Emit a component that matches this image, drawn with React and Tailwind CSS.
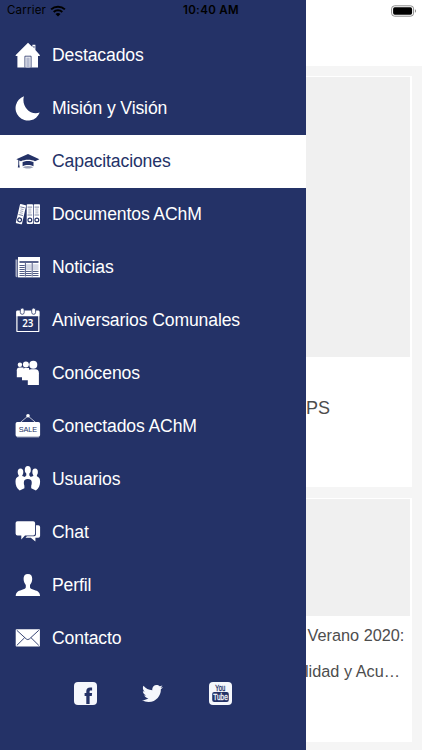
import { FaTwitter } from 'react-icons/fa';

const NAVY = '#243267';

const HomeIcon = () => (
  <>
    <path d="M13 .7 17.4 5V2.800h3v5.100l4.600 5.400-.4.600H23v11.600H2.400V13.900H.9l-.4-.6z" />
    <path d="M9.900 25.500V14.200h6.200v11.300" fill="none" stroke={NAVY} strokeWidth=".8" />
    <path d="M11.300 15.500h3.400v10h-3.400z" fill="#b4bad0" />
    <path d="M18.500 3.900h.9v2.500l-.9-.9z" fill={NAVY} />
  </>
);

const MoonIcon = () => (
  <path d="M8.900 1.300A12.500 12.500 0 1 0 24.700 17.600C15 20.900 6.200 11.500 8.900 1.300z" />
);

const CapIcon = () => (
  <>
    <path d="M13 6 24.400 11.200 20 13.200C16.500 11.200 9.500 11.200 6 13.200L4.200 12.400V16.300L4.800 19.600H2.800L3.300 16.300V12L1.300 11.200z" />
    <path d="M7.600 14C10.500 12.500 15.500 12.500 18.500 14V18.200C15.500 16.700 10.500 16.700 7.600 18.200z" />
    <path d="M7.700 19.200C10.800 17.600 15.200 17.600 18.300 19.200 15.500 20.900 10.500 20.900 7.700 19.200z" opacity=".45" />
  </>
);

const Binder = () => (
  <>
    <rect width="6.300" height="19.600" rx=".8" />
    <path d="M.9 2.800h4.500M.9 10.700h4.500" stroke={NAVY} strokeWidth=".6" />
    <path d="M1.600 4.800h3.100M1.600 6.700h3.100M1.600 8.600h3.100" stroke={NAVY} strokeWidth=".4" />
    <circle cx="3.150" cy="15.700" r="1.900" fill="none" stroke={NAVY} strokeWidth="1.200" />
  </>
);

const BindersIcon = () => (
  <>
    <g transform="translate(5.100 2.900) rotate(13)"><Binder /></g>
    <g transform="translate(11.700 3.300)"><Binder /></g>
    <g transform="translate(18.700 3.300)"><Binder /></g>
  </>
);

const NewsIcon = () => (
  <>
    <path d="M.5 5.500h2v17.700H2A1.500 1.500 0 0 1 .5 21.700z" opacity=".6" />
    <path d="M3 3h22v20.400H3z" />
    <path d="M4.500 8h19" stroke={NAVY} strokeWidth="1.500" />
    <path
      d="M4.500 11.500h5.200M4.500 13.500h5.200M4.500 15.500h5.200M4.500 17.500h5.200M4.500 19.500h5.200M4.500 21.500h5.200M11 17.500h5.500M11 19.500h5.500M11 21.500h5.500M18 17.500h5.500M18 19.500h5.500M18 21.500h5.500"
      stroke={NAVY}
      strokeWidth=".8"
    />
    <path d="M11 10.300h5.500v5.900H11zM18 10.300h5.500v5.900H18z" fill="#d5d9e6" />
    <path d="M10.400 9v13.500M17.200 9v13.500" stroke={NAVY} strokeWidth=".8" />
  </>
);

const CalendarIcon = () => (
  <>
    <path d="M1.300 4.500a1 1 0 0 1 1-1h21.100a1 1 0 0 1 1 1v4.700H1.300z" />
    <rect x="1.900" y="4.500" width="21.900" height="20" rx=".6" fill="none" stroke="#fff" strokeWidth="1.200" />
    <rect x="5.300" y="1.100" width="3.900" height="6.200" rx="1.950" stroke={NAVY} strokeWidth=".8" />
    <rect x="16.700" y="1.100" width="3.900" height="6.200" rx="1.950" stroke={NAVY} strokeWidth=".8" />
    <text x="12.800" y="20.400" textAnchor="middle" fontSize="9.800" fontWeight="600" fontFamily="Noto Sans, sans-serif">
      23
    </text>
  </>
);

const PeopleIcon = () => (
  <>
    <circle cx="4.900" cy="4.700" r="2.200" />
    <circle cx="10.900" cy="4.400" r="3" />
    <circle cx="18.300" cy="4.700" r="4" />
    <path d="M1.800 10.200Q1.800 7.500 4.600 7.500H8.500L8 17.200H1.800z" />
    <path d="M7 11.200Q7 7.900 10.200 7.900H14V20.300H7z" />
    <path d="M12.800 12.600Q12.800 9.300 16.300 9.300H20.300Q23.900 9.300 23.900 13.200V25H12.800z" />
  </>
);

const SaleIcon = () => (
  <>
    <path d="M5.500 9.300 13 3 20.500 9.300" fill="none" stroke="#fff" strokeWidth=".7" />
    <circle cx="13" cy="2.800" r="1.800" />
    <rect x=".6" y="9" width="24.500" height="14.700" rx="1.700" />
    <path d="M2 24.600h22" stroke="#fff" strokeWidth=".5" opacity=".6" />
    <text x="12.900" y="19.200" textAnchor="middle" fontSize="7.300" fill={NAVY} fontFamily="Liberation Sans, sans-serif">
      SALE
    </text>
  </>
);

const UsersIcon = () => (
  <>
    <ellipse cx="5.500" cy="5.900" rx="2.800" ry="3.500" />
    <ellipse cx="20.100" cy="5.900" rx="2.800" ry="3.500" />
    <ellipse cx="12.800" cy="3.900" rx="3" ry="3.800" />
    <path d="M3.700 7.500h3.600v2.600l2.700 1c.3-1 .9-1.500 1.300-1.700V6h3v3.400c.4.200 1 .7 1.300 1.700l2.700-1V7.500h3.600v2.800c2.500 1 3.200 2.700 3.200 5.500 0 3.500-1.300 6.900-4.200 8.800l-4.700-2.300v-2.600c.8-1.500.8-4.700-.3-5.700-1.500-1.200-4.700-1.200-6.200 0-1.100 1-1.100 4.200-.3 5.700v2.600l-4.700 2.300C1.800 22.700.5 19.300.5 15.800.5 13 1.200 11.300 3.700 10.300z" />
  </>
);

const ChatIcon = () => (
  <>
    <path d="M21 6.200h2.200a1.900 1.900 0 0 1 1.900 1.900v8.700a1.900 1.900 0 0 1-1.900 1.900H20.400v3.800l-4.600-3.800h-5.300l1.400-1.500h7.200a1.900 1.900 0 0 0 1.900-1.900z" />
    <path d="M2.500 2.200h15.700a1.900 1.900 0 0 1 1.900 1.900v10.400a1.900 1.900 0 0 1-1.900 1.900H10l-3.700 4v-4H2.500a1.900 1.900 0 0 1-1.900-1.900V4.100a1.900 1.900 0 0 1 1.900-1.900z" />
  </>
);

const ProfileIcon = () => (
  <path d="M12.900 2c2.900 0 4.500 1.900 4.300 5-.1 2.700-1.100 4.600-2.200 6v2.200c0 1.300 1.300 1.800 4.300 2.700 3.500 1.100 5.500 2 5.800 6H.7c.3-4 2.300-4.900 5.800-6 3-.9 4.300-1.400 4.300-2.700V13c-1.100-1.400-2.100-3.300-2.200-6-.2-3.100 1.400-5 4.300-5z" />
);

const MailIcon = () => (
  <>
    <rect x=".7" y="4.200" width="24.200" height="17.200" rx=".7" />
    <path d="M1.800 5.300 11.300 14q1.500 1.200 3 0L23.800 5.300M1.800 20.400 9.600 12.700M23.800 20.400 16 12.700" fill="none" stroke={NAVY} strokeWidth=".9" />
  </>
);

const menuItems = [
  { label: 'Destacados', icon: HomeIcon },
  { label: 'Misión y Visión', icon: MoonIcon },
  { label: 'Capacitaciones', icon: CapIcon, active: true },
  { label: 'Documentos AChM', icon: BindersIcon },
  { label: 'Noticias', icon: NewsIcon },
  { label: 'Aniversarios Comunales', icon: CalendarIcon },
  { label: 'Conócenos', icon: PeopleIcon },
  { label: 'Conectados AChM', icon: SaleIcon },
  { label: 'Usuarios', icon: UsersIcon },
  { label: 'Chat', icon: ChatIcon },
  { label: 'Perfil', icon: ProfileIcon },
  { label: 'Contacto', icon: MailIcon },
];

const MenuItem = ({ label, icon: Icon, active }) => (
  <li>
    <a
      className={`flex h-[52.95px] items-center gap-[11px] pl-[15px] text-[17.6px] tracking-[-.12px] ${
        active ? 'bg-white text-[#243267]' : 'text-white'
      }`}
    >
      <svg viewBox="0 0 26 26" className="h-[26px] w-[26px] shrink-0" fill="currentColor">
        <Icon />
      </svg>
      <span className="pt-px leading-[27px] whitespace-nowrap">{label}</span>
    </a>
  </li>
);

const SocialLinks = () => (
  <div className="flex items-center pt-[18px] pl-[74px] text-[#f5f7fc]">
    <svg viewBox="0 0 23 23" className="h-[23px] w-[23px]" fill="currentColor">
      <rect width="23" height="23" rx="4" />
      <path d="M12.300 22V14.100H10.600V10.900h1.700V9.300c0-2.600 1.300-3.900 3.800-3.900h2v3.100h-1.400c-.9 0-1.100.4-1.100 1.200v1.200h2.500l-.3 3.200h-2.200V22z" fill={NAVY} />
    </svg>
    <FaTwitter className="ml-[45px] h-[21px] w-[21px]" />
    <svg viewBox="0 0 23 23" className="ml-[46px] h-[23px] w-[23px]" fill="currentColor">
      <rect width="23" height="23" rx="4" />
      <rect x="3.200" y="10" width="16.600" height="10" rx="2" fill={NAVY} />
      <g fontFamily="Liberation Sans, sans-serif" textAnchor="middle">
        <text transform="translate(11.200 8.900) scale(.65 1)" fontSize="9" fill={NAVY} stroke={NAVY} strokeWidth=".3">You</text>
        <text transform="translate(11.500 18.400) scale(.72 1)" fontSize="9" stroke="currentColor" strokeWidth=".3">Tube</text>
      </g>
    </svg>
  </div>
);

const SideMenu = () => (
  <nav className="h-full w-[305.5px] shrink-0 bg-[#243267] pt-[28.8px]">
    <ul>
      {menuItems.map((item) => (
        <MenuItem key={item.label} {...item} />
      ))}
    </ul>
    <SocialLinks />
  </nav>
);

const Feed = () => (
  <main className="min-w-0 flex-1 bg-[#f5f5f5] text-[#4d4d4d]">
    <header className="h-[66px] bg-white" />
    <article className="mt-[10px] mr-[10.5px] h-[411px] bg-white pt-px pr-[1.5px]">
      <div className="h-[279.5px] bg-[#f0f0f0]" />
      <p className="mt-[38px] ml-[.5px] text-[18px] leading-[26px]">PS</p>
    </article>
    <article className="mt-[10.5px] mr-[10.5px] h-[244px] bg-white pt-px pr-[1.5px]">
      <div className="h-[117px] bg-[#f0f0f0]" />
      <p className="ml-[2px] pt-[2.5px] text-[16.3px] leading-[35px] whitespace-nowrap">Verano 2020:</p>
      <p className="-ml-[.5px] text-[16.3px] leading-[36px] whitespace-nowrap">lidad y Acu…</p>
    </article>
  </main>
);

const StatusBar = () => (
  <div className="absolute inset-x-0 top-0 grid h-[22px] grid-cols-3 items-center pr-[5px] pl-[7px] font-[Inter,sans-serif] text-[11.5px] text-black">
    <div className="flex items-center gap-[4px]">
      <span className="tracking-[.2px]">Carrier</span>
      <svg viewBox="0 0 16 12" className="h-[12px] w-[16px]" fill="none" stroke="#000" strokeWidth="2">
        <path d="M1.100 4.400a10 10 0 0 1 13.800 0M3.700 7a6.300 6.300 0 0 1 8.600 0" />
        <path d="M8 11.600 5.500 9.100a3.600 3.600 0 0 1 5 0z" fill="#000" stroke="none" />
      </svg>
    </div>
    <span className="-ml-[2px] text-center font-semibold tracking-[.35px]">10:40 AM</span>
    <svg viewBox="0 0 26 12" className="mb-px h-[12px] w-[26px] justify-self-end">
      <rect x=".6" y=".8" width="22" height="10.400" rx="3" fill="none" stroke="#8c8c8c" />
      <rect x="2.100" y="2.300" width="19" height="7.400" rx="1.600" />
      <path d="M24 4.300c1.200.5 1.200 2.900 0 3.400z" fill="#777" />
    </svg>
  </div>
);

const App = () => (
  <div className="relative flex h-[750px] w-[422px] overflow-hidden font-['Liberation_Sans',sans-serif]">
    <SideMenu />
    <Feed />
    <StatusBar />
  </div>
);

export default App;
